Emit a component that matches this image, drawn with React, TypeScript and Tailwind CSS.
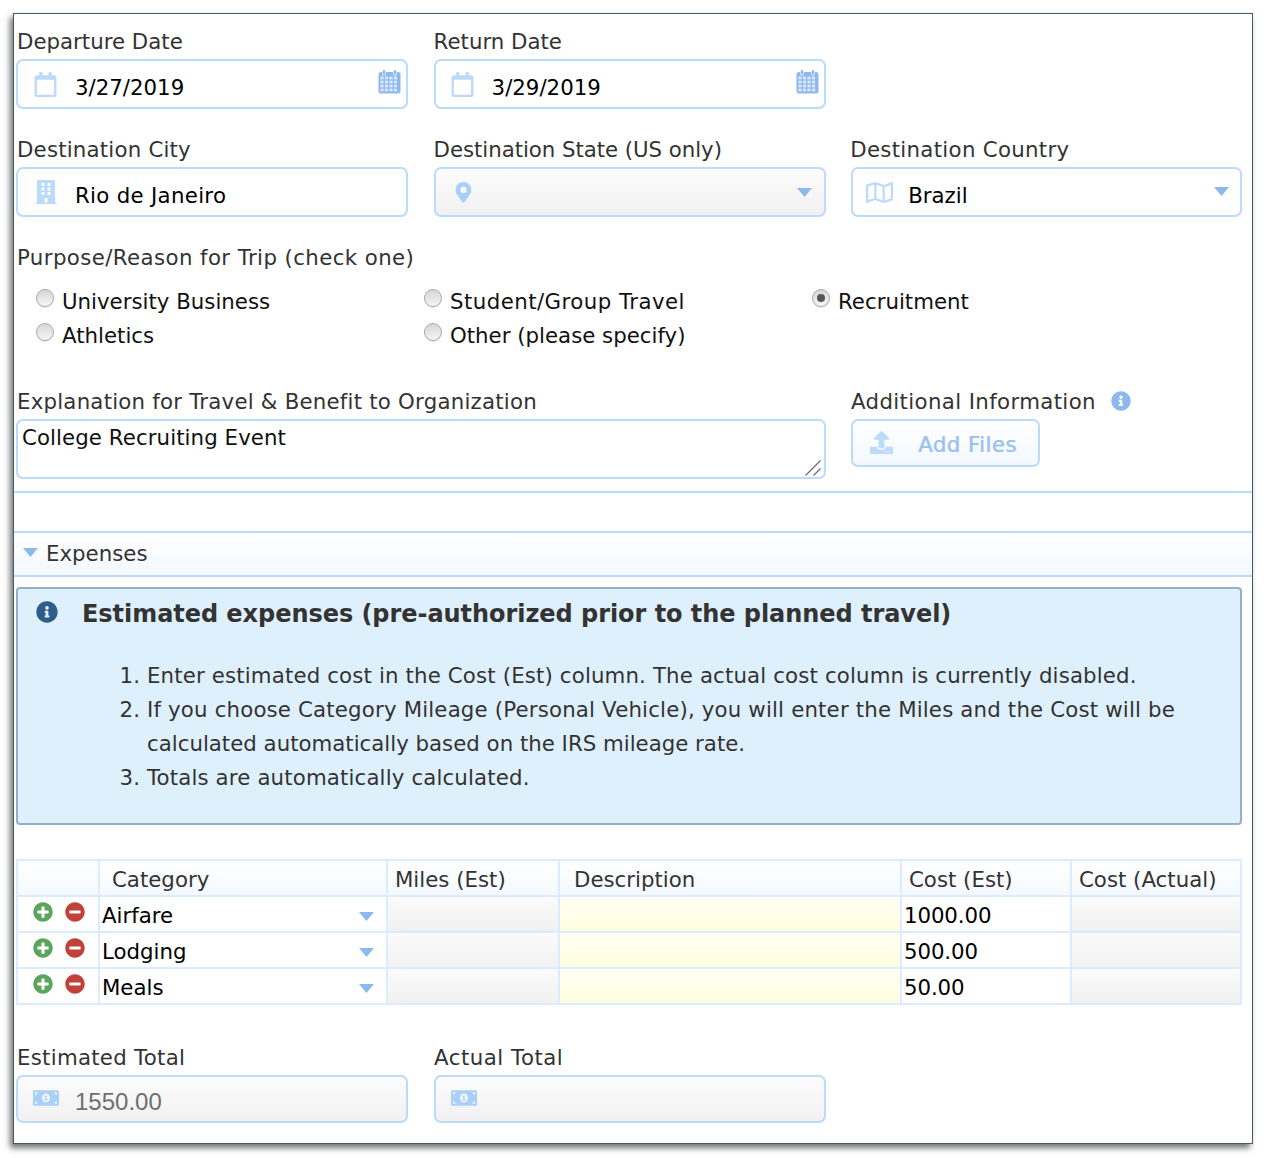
import React from "react";
import { FaRegCalendar, FaBuilding, FaMapMarkerAlt, FaRegMap, FaUpload, FaInfoCircle, FaPlusCircle, FaMinusCircle, FaMoneyBillAlt } from "react-icons/fa";

const labelCls = "block h-6 mb-[6px] leading-[26px] text-[21.3px] text-[#333] whitespace-nowrap";
const valueCls = "text-[21.3px] text-black whitespace-nowrap mt-[8px]";

function Caret({ className = "" }: { className?: string }) {
  return (
    <svg width="15" height="9" viewBox="0 0 15 9" className={className}>
      <path d="M0 0H15L7.5 9Z" fill="#8db8ee" />
    </svg>
  );
}

function CalendarGrid() {
  const xs = [4, 8.5, 13, 17.5];
  const ys = [9, 13, 17, 21];
  return (
    <svg width="23" height="25" viewBox="0 0 23 25" className="mr-[5px] -mt-[5px] shrink-0">
      <rect x="0.5" y="3" width="22" height="21.5" rx="2.5" fill="#8db8ee" />
      <rect x="4.5" y="0.5" width="3" height="6" rx="1.5" fill="#8db8ee" stroke="#fff" strokeWidth="0.7" />
      <rect x="15.5" y="0.5" width="3" height="6" rx="1.5" fill="#8db8ee" stroke="#fff" strokeWidth="0.7" />
      {xs.map((x) => ys.map((y) => <rect key={`${x}-${y}`} x={x - 1.6} y={y - 1.4} width="3.2" height="2.8" fill="#dbe9fb" />))}
    </svg>
  );
}

function Field({ label, labelClass = "", icon, value, right, disabled, h = "h-[50px]", valueClass = valueCls }: { label: React.ReactNode; labelClass?: string; icon: React.ReactNode; value?: string; right?: React.ReactNode; disabled?: boolean; h?: string; valueClass?: string }) {
  return (
    <div>
      <label className={`${labelCls} ${labelClass}`}>{label}</label>
      <div className={`${h} flex items-center rounded-[7px] border-2 border-[#bcdafa] ${disabled ? "bg-gradient-to-b from-[#fcfcfc] to-[#f1f1f1]" : "bg-white"}`}>
        <span className="w-[56px] shrink-0 flex justify-center">{icon}</span>
        <span className={`${valueClass} flex-1`}>{value}</span>
        {right}
      </div>
    </div>
  );
}

function Radio({ label, checked, labelClass = "" }: { label: string; checked?: boolean; labelClass?: string }) {
  return (
    <div className="h-[34px] flex items-center">
      <span className="w-[18px] h-[18px] -mt-[8px] shrink-0 rounded-full border border-[#aaaaaa] bg-gradient-to-b from-[#d6d6d6] to-[#f6f6f6] shadow-[0_1px_1px_rgba(0,0,0,0.12)] flex items-center justify-center">
        {checked && <span className="w-[8px] h-[8px] rounded-full bg-[#555]" />}
      </span>
      <span className={`ml-[8px] text-[21.3px] text-[#111] whitespace-nowrap ${labelClass}`}>{label}</span>
    </div>
  );
}

const rows = [
  ["Airfare", "1000.00"],
  ["Lodging", "500.00"],
  ["Meals", "50.00"],
];
const headCell = "h-[34px] pt-[4px] bg-gradient-to-b from-white to-[#f4f9ff] flex items-center text-[21.3px] text-[#333] whitespace-nowrap";
const disabledCell = "h-[34px] bg-gradient-to-b from-[#fbfbfb] to-[#f1f1f1]";
const calIcon = "text-[#bcdafa] text-[25px] -ml-[2px]";

export default function App() {
  return (
    <div className="w-[1267px] h-[1158px] bg-white pt-[13px] pl-[13px] font-['DejaVu_Sans',sans-serif]">
      <div className="w-[1240px] h-[1131px] border border-[#47566b] bg-white shadow-[-3px_4px_6px_rgba(0,0,0,0.55)]">
        <div className="pt-[15px] pl-[2px] pr-[10px]">
          <div className="grid grid-cols-[392px_392px_391px] gap-x-[25.6px] gap-y-[28px]">
            <Field label="Departure Date" labelClass="pl-[1px]" icon={<FaRegCalendar className={calIcon} />} value="3/27/2019" valueClass={`${valueCls} pl-[1px]`} right={<CalendarGrid />} />
            <Field label="Return Date" icon={<FaRegCalendar className={calIcon} />} value="3/29/2019" right={<CalendarGrid />} />
            <div />
            <Field label="Destination City" labelClass="pl-[1px] tracking-[0.2px]" icon={<FaBuilding className="text-[#bcdafa] text-[24px]" />} value="Rio de Janeiro" valueClass={`${valueCls} pl-[1px] tracking-[0.3px]`} />
            <Field label="Destination State (US only)" labelClass="tracking-[-0.05px]" disabled icon={<FaMapMarkerAlt className="text-[#a9d0fb] text-[21px]" />} right={<Caret className="mr-[12px]" />} />
            <Field label="Destination Country" labelClass="-ml-[1px] tracking-[0.3px]" icon={<FaRegMap className="text-[#bcdafa] text-[27px] -ml-[4px]" />} value="Brazil" valueClass={`${valueCls} -ml-[1px]`} right={<Caret className="mr-[11px] -mt-[2px]" />} />
          </div>

          <div className="mt-[28px]">
            <label className={`${labelCls} pl-[1px] tracking-[0.4px]`}>Purpose/Reason for Trip (check one)</label>
            <div className="mt-[16px] pl-[20px] grid grid-cols-[388px_388px_1fr]">
              <Radio label="University Business" />
              <Radio label="Student/Group Travel" labelClass="tracking-[0.45px]" />
              <Radio checked label="Recruitment" />
              <Radio label="Athletics" />
              <Radio label="Other (please specify)" />
            </div>
          </div>

          <div className="mt-[36px] grid grid-cols-[810px_1fr] gap-x-[25px]">
            <div>
              <label className={`${labelCls} pl-[1px] tracking-[0.22px]`}>Explanation for Travel &amp; Benefit to Organization</label>
              <div className="relative">
                <textarea
                  readOnly
                  defaultValue="College Recruiting Event"
                  className="block w-full h-[60px] rounded-[7px] border-2 border-[#bcdafa] px-[4px] py-[2px] text-[21.3px] tracking-[0.08px] leading-[30px] text-[#111] outline-none resize-none bg-white"
                />
                <svg width="16" height="16" viewBox="0 0 16 16" className="absolute right-[5px] bottom-[3px]">
                  <path d="M0.5 15.5L15.5 0.5M8.5 15.5L15.5 8.5" stroke="#666" strokeWidth="1.1" fill="none" />
                </svg>
              </div>
            </div>
            <div>
              <label className={`${labelCls} tracking-[0.36px]`}>
                Additional Information
                <FaInfoCircle className="inline text-[#8db8ee] text-[20px] ml-[15px] -mt-[5px]" />
              </label>
              <div className="w-[189px] h-[48px] rounded-[7px] border-2 border-[#bcdafa] bg-gradient-to-b from-white to-[#f2f8ff] flex items-center">
                <FaUpload className="text-[#bcdafa] text-[23px] ml-[17px] -mt-[1px]" />
                <span className="ml-[25px] mt-[4px] text-[21.3px] tracking-[0.45px] [text-shadow:0.4px_0_0_#9cc3f0] text-[#9cc3f0] whitespace-nowrap">Add Files</span>
              </div>
            </div>
          </div>
        </div>

        <div className="mt-[12px] h-[2px] bg-[#bcdafa]" />
        <div className="mt-[38px] h-[46px] border-y-2 border-[#bcdafa] bg-gradient-to-b from-white to-[#f3f8fe] flex items-center pl-[9px]">
          <Caret className="-mt-[3px]" />
          <span className="ml-[8px] text-[21.3px] text-[#333]">Expenses</span>
        </div>

        <div className="pl-[2px] pr-[10px]">
          <div className="mt-[10px] h-[238px] rounded-[4px] border-2 border-[#95afc9] bg-[#dff0fd] text-[#333]">
            <div className="flex items-center h-[50px] pl-[18px]">
              <FaInfoCircle className="text-[#2f5d8a] text-[22px] -mt-[4px]" />
              <h2 className="ml-[24px] text-[24px] tracking-[-0.05px] font-bold text-[#333] whitespace-nowrap">Estimated expenses (pre-authorized prior to the planned travel)</h2>
            </div>
            <ol className="mt-[20px] pl-[129px] pr-[20px] list-decimal text-[21.3px] tracking-[0.145px] leading-[34px]">
              <li>Enter estimated cost in the Cost (Est) column. The actual cost column is currently disabled.</li>
              <li>
                <span className="tracking-[0.17px]">If you choose Category Mileage (Personal Vehicle), you will enter the Miles and the Cost will be</span>{" "}
                <span className="tracking-[0px]">calculated automatically based on the IRS mileage rate.</span>
              </li>
              <li>Totals are automatically calculated.</li>
            </ol>
          </div>

          <div className="mt-[34px] grid grid-cols-[80px_286px_170px_340px_168px_168px] gap-[2px] p-[2px] bg-[#dcebfd]">
            <div className={headCell} />
            <div className={`${headCell} pl-[12px]`}>Category</div>
            <div className={`${headCell} pl-[7px]`}>Miles (Est)</div>
            <div className={`${headCell} pl-[14px]`}>Description</div>
            <div className={`${headCell} pl-[7px]`}>Cost (Est)</div>
            <div className={`${headCell} pl-[7px]`}>Cost (Actual)</div>
            {rows.map(([cat, cost]) => (
              <React.Fragment key={cat}>
                <div className="h-[34px] bg-white flex items-center pl-[15px] gap-[12px]">
                  <FaPlusCircle className="text-[#5aa45c] text-[20px] -mt-[4px]" />
                  <FaMinusCircle className="text-[#c2403a] text-[20px] -mt-[4px]" />
                </div>
                <div className="h-[34px] pt-[4px] bg-white flex items-center justify-between pl-[2px] pr-[12px] text-[21.3px] text-black">
                  <span>{cat}</span>
                  <Caret />
                </div>
                <div className={disabledCell} />
                <div className="h-[34px] bg-gradient-to-b from-[#fffef2] to-[#fffddf]" />
                <div className="h-[34px] pt-[4px] bg-white flex items-center pl-[2px] text-[21.3px] tracking-[-0.1px] text-black">{cost}</div>
                <div className={disabledCell} />
              </React.Fragment>
            ))}
          </div>

          <div className="mt-[40px] grid grid-cols-[392px_392px] gap-x-[26px]">
            <Field label="Estimated Total" labelClass="pl-[1px] tracking-[0.27px]" disabled h="h-[48px]" icon={<FaMoneyBillAlt className="text-[#a9d0fb] text-[26px] -mt-[3px]" />} value="1550.00" valueClass="font-['Liberation_Sans',sans-serif] text-[24px] text-[#6f6f6f] mt-[6px] pl-[1px]" />
            <Field label="Actual Total" labelClass="tracking-[0.5px]" disabled h="h-[48px]" icon={<FaMoneyBillAlt className="text-[#a9d0fb] text-[26px] -mt-[3px]" />} />
          </div>
        </div>
      </div>
    </div>
  );
}
